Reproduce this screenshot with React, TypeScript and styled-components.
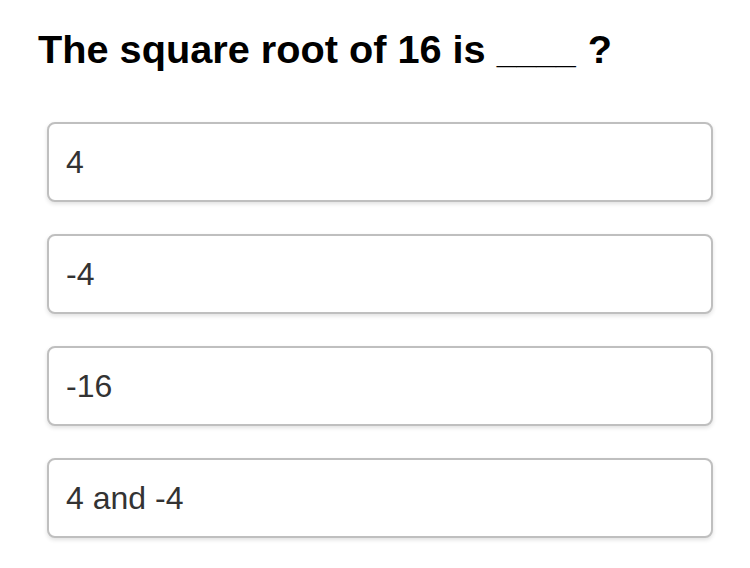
import React from "react";
import styled, { createGlobalStyle } from "styled-components";

const GlobalStyle = createGlobalStyle`
  html, body {
    margin: 0;
    padding: 0;
    background: #ffffff;
  }
  body {
    font-family: "Liberation Sans", Arial, Helvetica, sans-serif;
  }
`;

const Page = styled.div`
  width: 750px;
  height: 568px;
  box-sizing: border-box;
  padding: 26px 38px 0 38px;
  display: flex;
  flex-direction: column;
  overflow: hidden;
`;

const Question = styled.h1`
  margin: 0;
  height: 46px;
  font-size: 39.7px;
  line-height: 46px;
  font-weight: 700;
  color: #000;
  white-space: nowrap;
`;

const Blank = styled.span`
  font-size: 35.5px;
  line-height: 0;
  margin-right: 1px;
`;

const Options = styled.div`
  margin-top: 50px;
  margin-left: 9px;
  width: 666px;
  display: flex;
  flex-direction: column;
  gap: 32px;
`;

const Option = styled.button`
  box-sizing: border-box;
  height: 80px;
  width: 100%;
  display: flex;
  align-items: center;
  padding: 0 0 0 17px;
  background: #fff;
  border: 2px solid #bfbfbf;
  border-radius: 8px;
  box-shadow: 0 2px 4px rgba(0, 0, 0, 0.12);
  font-family: "Liberation Sans", Arial, Helvetica, sans-serif;
  font-size: 32px;
  color: #333;
  text-align: left;
  cursor: pointer;
`;

const answers = ["4", "-4", "-16", "4 and -4"];

export default function App() {
  return (
    <>
      <GlobalStyle />
      <Page>
        <Question>
          The square root of 16 is <Blank>____</Blank> ?
        </Question>
        <Options>
          {answers.map((a) => (
            <Option key={a}>{a}</Option>
          ))}
        </Options>
      </Page>
    </>
  );
}
